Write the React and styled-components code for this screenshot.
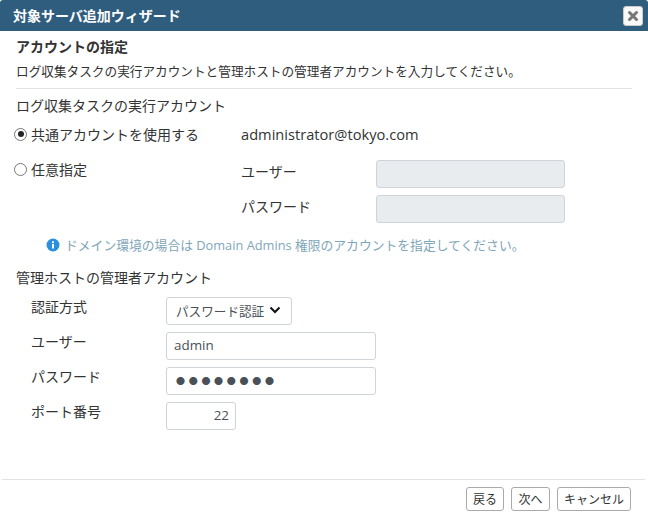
import React from "react";
import styled, { createGlobalStyle } from "styled-components";

const Global = createGlobalStyle`
  html, body { margin: 0; padding: 0; background: #fff; }
  body { font-family: "Open Sans", "Noto Sans CJK JP", sans-serif; color: #333; font-size: 14px; }
`;

const Dialog = styled.div`
  width: 648px;
  height: 521px;
  display: flex;
  flex-direction: column;
  box-sizing: border-box;
  background: #fff;
  overflow: hidden;
`;

const TitleBar = styled.header`
  height: 31px;
  flex: none;
  box-sizing: border-box;
  background: #2f5d7e;
  border-radius: 3px 3px 0 0;
  display: flex;
  align-items: center;
  justify-content: space-between;
  padding: 0 5px 0 13px;
`;

const Title = styled.h1`
  margin: 0;
  font-size: 14px;
  font-weight: 700;
  color: #fff;
  line-height: 20px;
`;

const CloseButton = styled.button`
  width: 20px;
  height: 20px;
  margin-top: 1px;
  padding: 0;
  box-sizing: border-box;
  border: 1px solid #ccc;
  border-radius: 3px;
  background: #f8f8f8;
  display: flex;
  align-items: center;
  justify-content: center;
`;

const Content = styled.main`
  flex: 1;
  padding: 6px 16px 0;
  display: flex;
  flex-direction: column;
`;

const Heading = styled.h2`
  margin: 0;
  font-size: 14px;
  font-weight: 700;
  line-height: 20px;
  color: #333;
`;

const Lead = styled.p`
  margin: 4px 0 0;
  font-size: 12.65px;
  line-height: 20px;
  color: #333;
`;

const Rule = styled.hr`
  margin: 7px 0 0;
  border: 0;
  border-top: 1px solid #e2e2e2;
`;

const SectionTitle = styled.h3`
  margin: ${(p) => p.$top}px 0 0;
  font-size: 14px;
  font-weight: 400;
  line-height: 20px;
  color: #333;
`;

const AccountGrid = styled.div`
  margin-top: 9px;
  display: grid;
  grid-template-columns: 225px 135px 189px;
  grid-auto-rows: 28px;
  row-gap: 7px;
`;

const RadioLabel = styled.label`
  display: flex;
  align-items: center;
  gap: 4px;
  margin: -1px 0 0 -2px;
  height: 20px;
  font-size: 14px;
  color: #333;
`;

const RadioMark = styled.span`
  width: 13px;
  height: 13px;
  box-sizing: border-box;
  border: 1px solid #777;
  border-radius: 50%;
  background: #fff;
  display: flex;
  align-items: center;
  justify-content: center;
  &::after {
    content: "";
    width: 6px;
    height: 6px;
    border-radius: 50%;
    background: ${(p) => (p.$checked ? "#222" : "transparent")};
  }
`;

const Account = styled.span`
  margin-top: -1px;
  font-size: 14.65px;
  line-height: 20px;
  color: #333;
`;

const FieldLabel = styled.span`
  font-size: 14px;
  line-height: 20px;
  padding-top: 2px;
  color: #333;
`;

const Input = styled.input`
  box-sizing: border-box;
  width: ${(p) => p.$w || 189}px;
  height: 28px;
  padding: 0 ${(p) => (p.$right ? 6 : 7)}px 2px;
  border: 1px solid #ced4da;
  border-radius: 3px;
  background: ${(p) => (p.disabled ? "#e9ecef" : "#fff")};
  font-family: "Open Sans", "Noto Sans CJK JP", sans-serif;
  font-size: 13.4px;
  color: #495057;
  text-align: ${(p) => (p.$right ? "right" : "left")};
  outline: none;
`;

const MaskedInput = styled(Input)`
  font-family: "Noto Sans CJK JP", sans-serif;
  font-size: 9px;
  letter-spacing: 3.7px;
  padding-left: 9px;
  padding-bottom: 2px;
`;

const Info = styled.div`
  margin: 12px 0 0 30px;
  display: flex;
  align-items: center;
  gap: 5px;
  font-size: 12.8px;
  line-height: 20px;
  color: #7fa6b8;
`;

const AdminGrid = styled.div`
  margin-top: 9px;
  padding-left: 15px;
  display: grid;
  grid-template-columns: 135px 1fr;
  grid-auto-rows: 28px;
  row-gap: 7px;
`;

const AdminLabel = styled.span`
  font-size: 14px;
  line-height: 20px;
  color: #333;
`;

const SelectBox = styled.div`
  box-sizing: border-box;
  width: 126px;
  height: 28px;
  padding: 0 10px 2px 9px;
  border: 1px solid #ced4da;
  border-radius: 3px;
  background: #fff;
  display: flex;
  align-items: center;
  justify-content: space-between;
  font-size: 12.6px;
  color: #495057;
  white-space: nowrap;
`;

const Footer = styled.footer`
  flex: none;
  margin: 0 3px 0 2px;
  height: 42px;
  box-sizing: border-box;
  border-top: 1px solid #e2e2e2;
  padding: 7px 14px 0 0;
  display: flex;
  justify-content: flex-end;
  align-items: flex-start;
  gap: 7px;
`;

const FootButton = styled.button`
  width: ${(p) => p.$w}px;
  height: 24px;
  box-sizing: border-box;
  padding: 0;
  border: 1px solid #aaa;
  border-radius: 3px;
  background: #fff;
  font-family: "Open Sans", "Noto Sans CJK JP", sans-serif;
  font-size: 12px;
  color: #333;
  white-space: nowrap;
`;

const Spacer = styled.span``;

export default function App() {
  return (
    <>
      <Global />
      <Dialog>
        <TitleBar>
          <Title>対象サーバ追加ウィザード</Title>
          <CloseButton aria-label="close">
            <svg width="12" height="12" viewBox="0 0 12 12">
              <path d="M2.5 2.5 L9.5 9.5 M9.5 2.5 L2.5 9.5" stroke="#777" strokeWidth="3" strokeLinecap="round" />
            </svg>
          </CloseButton>
        </TitleBar>
        <Content>
          <Heading>アカウントの指定</Heading>
          <Lead>ログ収集タスクの実行アカウントと管理ホストの管理者アカウントを入力してください。</Lead>
          <Rule />
          <SectionTitle $top={7}>ログ収集タスクの実行アカウント</SectionTitle>
          <AccountGrid>
            <RadioLabel><RadioMark $checked />共通アカウントを使用する</RadioLabel>
            <Account>administrator@tokyo.com</Account>
            <Spacer />
            <RadioLabel><RadioMark />任意指定</RadioLabel>
            <FieldLabel>ユーザー</FieldLabel>
            <Input disabled />
            <Spacer />
            <FieldLabel>パスワード</FieldLabel>
            <Input disabled />
          </AccountGrid>
          <Info>
            <svg width="14" height="14" viewBox="0 0 14 14">
              <circle cx="7" cy="7" r="6.5" fill="#2b8fe0" />
              <rect x="6" y="6" width="2" height="4.5" fill="#fff" />
              <rect x="6" y="3.3" width="2" height="1.8" fill="#fff" />
            </svg>
            ドメイン環境の場合は Domain Admins 権限のアカウントを指定してください。
          </Info>
          <SectionTitle $top={13}>管理ホストの管理者アカウント</SectionTitle>
          <AdminGrid>
            <AdminLabel>認証方式</AdminLabel>
            <SelectBox>
              パスワード認証
              <svg width="12" height="10" viewBox="0 0 12 10">
                <path d="M1.5 2.5 L6 7 L10.5 2.5" fill="none" stroke="#111" strokeWidth="2" />
              </svg>
            </SelectBox>
            <AdminLabel>ユーザー</AdminLabel>
            <Input $w={210} defaultValue="admin" />
            <AdminLabel>パスワード</AdminLabel>
            <MaskedInput $w={210} defaultValue="●●●●●●●●" />
            <AdminLabel>ポート番号</AdminLabel>
            <Input $w={70} $right defaultValue="22" />
          </AdminGrid>
        </Content>
        <Footer>
          <FootButton $w={38}>戻る</FootButton>
          <FootButton $w={39}>次へ</FootButton>
          <FootButton $w={74}>キャンセル</FootButton>
        </Footer>
      </Dialog>
    </>
  );
}
